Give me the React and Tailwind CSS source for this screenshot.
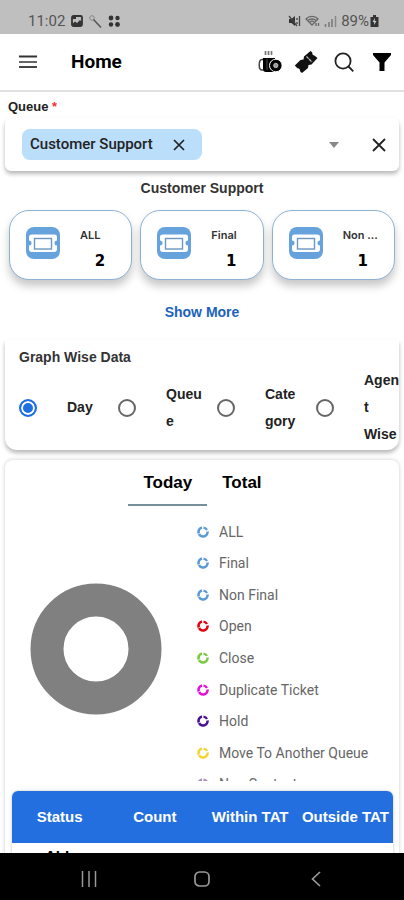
import { useState } from 'react'

const TICKET_CARDS = [
  { label: 'ALL', count: 2 },
  { label: 'Final', count: 1 },
  { label: 'Non Final', count: 1 },
]

const GRAPH_OPTIONS = ['Day', 'Queue', 'Category', 'Agent Wise']

const LEGEND = [
  { label: 'ALL', color: '#5b9bd5' },
  { label: 'Final', color: '#5b9bd5' },
  { label: 'Non Final', color: '#5b9bd5' },
  { label: 'Open', color: '#e3000f' },
  { label: 'Close', color: '#7ac943' },
  { label: 'Duplicate Ticket', color: '#e60fd8' },
  { label: 'Hold', color: '#4b0f91' },
  { label: 'Move To Another Queue', color: '#f2d42e' },
  { label: 'Non Contact', color: '#a98fc4' },
]

const COLUMNS = ['Status', 'Count', 'Within TAT', 'Outside TAT']

function StatusBar() {
  return (
    <div className="flex h-[34px] shrink-0 items-end justify-between bg-[#bfbfbf] pr-[25px] pb-[3px] pl-7 font-['Roboto',sans-serif] text-[15px] leading-5 text-[#555]">
      <div className="flex items-center gap-1.5">
        <span>11:02</span>
        <svg width="12" height="12" viewBox="0 0 12 12">
          <rect x="1" y="1" width="10" height="10" rx="1.5" fill="none" stroke="#333" strokeWidth="1.800" />
          <path d="M1 9l3-2.500 2 1.500 3-3 2 2V11H1z" fill="#333" />
          <path d="M1 1h4v3H1z" fill="#333" />
        </svg>
        <svg width="13" height="13" viewBox="0 0 13 13" fill="none">
          <circle cx="3" cy="3" r="2.3" stroke="#888" />
          <path d="M4.500 4.500L12 12.500" stroke="#555" strokeWidth="1.500" />
        </svg>
        <svg width="12" height="12" viewBox="0 0 12 12" fill="#333">
          <circle cx="3" cy="3" r="2.400" />
          <circle cx="9.500" cy="3" r="2.200" />
          <circle cx="3" cy="9.500" r="2.200" />
          <circle cx="9.500" cy="9.500" r="2.400" />
        </svg>
      </div>
      <div className="flex items-center gap-1">
        <svg width="13" height="12" viewBox="0 0 13 12">
          <path d="M1 4h2.500L7 1v10L3.500 8H1z" fill="#333" />
          <path d="M1 1l8 10M9 3v2M9 7v2M11.500 1v10" stroke="#444" strokeWidth="1.300" />
        </svg>
        <svg width="15" height="12" viewBox="0 0 15 12" fill="none" stroke="#666" strokeWidth="1.300">
          <path d="M1 4C4 .5 10 .5 13 4L7 10z" />
          <path d="M3 5.500c2-2 6-2 8 0M5 7c1-1 3-1 4 0" />
          <path d="M11 8v3M13.500 8v3" />
        </svg>
        <svg width="13" height="12" viewBox="0 0 13 12" stroke="#666" strokeWidth="1.500">
          <path d="M1.500 9v3M5 7v5M8 4v8" stroke="#777" />
          <path d="M11.500 1v11" stroke="#888" />
        </svg>
        <div className="flex items-center gap-px">
          <span>89%</span>
          <svg width="9" height="12" viewBox="0 0 9 12">
            <path d="M3 0h3v2h2.500v10H.5V2H3z" fill="#333" />
            <path d="M5 3L2.500 7h1.700L4 10l2.500-4H4.800z" fill="#ccc" />
          </svg>
        </div>
      </div>
    </div>
  )
}

function TopBar() {
  return (
    <header className="flex h-[58px] shrink-0 items-center border-b-2 border-[#e0e0e0] bg-white pr-3 pl-[19px]">
      <button type="button" aria-label="Menu">
        <svg width="18" height="14" viewBox="0 0 18 14" stroke="#444">
          <path d="M0 1.500h18" stroke="#333" strokeWidth="2" />
          <path d="M0 7h18" strokeWidth="2" stroke="#666" />
          <path d="M0 12h18" strokeWidth="2" />
        </svg>
      </button>
      <h1 className="ml-[34px] flex-1 font-['Roboto',sans-serif] text-[19px] font-bold text-black">Home</h1>
      <div className="flex items-center gap-3">
        <button type="button" aria-label="Break">
          <svg width="24" height="24" viewBox="0 0 24 24" fill="none">
            <path d="M7.500 1v4M10.500 1v4M13.500 1v4" stroke="#777" strokeWidth="1.700" />
            <path d="M5 8h12v14H8c-2 0-3-1-3-2.500z" fill="#000" />
            <path d="M9 9v11" stroke="#666" strokeWidth=".8" />
            <path d="M5 9.500H4C2 9.500 1.200 11 1.200 15S2 20 4 20h1" stroke="#444" strokeWidth="1.500" />
            <circle cx="17.800" cy="15.500" r="6.300" fill="#000" stroke="#fff" />
            <circle cx="17.800" cy="15.500" r="2.200" fill="#999" stroke="#ddd" strokeWidth=".7" />
          </svg>
        </button>
        <button type="button" aria-label="Tickets">
          <svg width="24" height="24" viewBox="0 0 24 24">
            <path
              d="M16.500 1l1.800 1.600c-.3 1.800.8 3 2.400 3.200L23.500 8l-6 6.500-3 .5-.5 3L8 23l-2-1.800c.4-1.800-.8-3.200-2.600-3L.8 15.500 6.500 10l3-.5.500-3z"
              fill="#111"
            />
            <path d="M12.500 6.500l5.500 5.500" stroke="#bbb" strokeWidth="1.300" strokeDasharray="3 .6" />
          </svg>
        </button>
        <button type="button" aria-label="Search" className="ml-1">
          <svg width="20" height="20" viewBox="0 0 20 20" fill="none" stroke="#222" strokeWidth="1.800">
            <circle cx="9" cy="9" r="7.600" />
            <path d="M14.500 14.500L19.300 19.300" />
          </svg>
        </button>
        <button type="button" aria-label="Filter" className="ml-1.5">
          <svg width="20" height="20" viewBox="0 0 20 20">
            <path d="M1 1h18v2l-6.500 7.500V19h-5v-8.500L1 3z" fill="#000" />
          </svg>
        </button>
      </div>
    </header>
  )
}

function QueueSelect() {
  return (
    <section aria-labelledby="queue-label">
      <h2 id="queue-label" className="px-2 pt-[5px] text-[13px] leading-5 font-bold text-[#222]">
        Queue <span className="text-red-500">*</span>
      </h2>
      <div className="mx-[5px] mt-px flex h-[53px] items-center rounded-md bg-white pr-[13px] pl-[17px] shadow-[0_3px_4px_rgba(0,0,0,0.28)]">
        <div className="flex h-[31px] items-center rounded-lg bg-[#bbdefb] pr-[17px] pl-2">
          <span className="font-['Roboto',sans-serif] text-[15px] font-medium text-[#222]">Customer Support</span>
          <button type="button" aria-label="Remove Customer Support" className="ml-5">
            <svg width="12" height="12" viewBox="0 0 12 12" stroke="#222" strokeWidth="1.700">
              <path d="M1 1l10 10M11 1L1 11" />
            </svg>
          </button>
        </div>
        <button type="button" aria-label="Open queue list" className="mr-[33px] ml-auto">
          <svg width="10" height="6" viewBox="0 0 10 6">
            <path d="M0 0h10L5 6z" fill="#888" />
          </svg>
        </button>
        <button type="button" aria-label="Clear queue">
          <svg width="14" height="14" viewBox="0 0 14 14" stroke="#222" strokeWidth="1.800">
            <path d="M1 1l12 12M13 1L1 13" />
          </svg>
        </button>
      </div>
    </section>
  )
}

function TicketIcon() {
  return (
    <svg width="34" height="32" viewBox="0 0 34 32" className="shrink-0">
      <rect width="34" height="32" rx="8" fill="#66a3dc" />
      <path
        d="M6 7.500h22c2 0 3 .8 3 2.500v3.500a2.500 2.500 0 0 0 0 5V22c0 2-1 3-3 3H6c-2 0-3-1-3-3v-3.500a2.500 2.500 0 0 0 0-5V10c0-1.700 1-2.500 3-2.500z"
        fill="#fff"
      />
      <rect x="8.500" y="11.500" width="17" height="10.500" fill="#fff" stroke="#6b97c2" strokeWidth="1.400" />
    </svg>
  )
}

function TicketCard({ label, count }) {
  return (
    <li className="flex h-[70px] items-start rounded-[20px] border border-[#8fb2d3] bg-white pt-4 pl-4 shadow-[0_6px_8px_rgba(0,0,0,0.22)]">
      <TicketIcon />
      <div className="ml-5 flex w-10 flex-col">
        <span className="truncate font-['Inter',sans-serif] text-[11px] leading-4 font-semibold text-[#333]">{label}</span>
        <span className="mt-2 text-center font-['DejaVu_Sans',sans-serif] text-[15px] leading-5 font-bold text-black">{count}</span>
      </div>
    </li>
  )
}

function GraphOptions() {
  const [selected, setSelected] = useState('Day')

  return (
    <section className="mx-[5px] mt-[18px] rounded-b-xl bg-white pt-[7px] pb-0.5 pl-[14px] shadow-[0_3px_4px_rgba(0,0,0,0.28)]">
      <h2 id="graph-title" className="text-sm leading-5 font-bold text-[#333]">
        Graph Wise Data
      </h2>
      <div role="radiogroup" aria-labelledby="graph-title" className="grid grid-cols-4 items-center gap-4">
        {GRAPH_OPTIONS.map((option) => (
          <label key={option} className="flex items-center">
            <input
              type="radio"
              name="graph"
              checked={selected === option}
              onChange={() => setSelected(option)}
              className="h-[18px] w-[18px] shrink-0 appearance-none rounded-full border-2 border-[#666] bg-white checked:border-[#1f6fe0] checked:bg-[#1f6fe0] checked:shadow-[inset_0_0_0_2px_white]"
            />
            <span className="ml-[30px] w-9 shrink-0 text-sm leading-[27px] font-bold wrap-break-word text-[#222]">{option}</span>
          </label>
        ))}
      </div>
    </section>
  )
}

function Legend() {
  return (
    <div className="h-[265px] overflow-hidden">
      <ul className="grid h-[284px] auto-rows-fr">
        {LEGEND.map((item) => (
          <li key={item.label} className="flex items-center gap-2.5">
            <svg width="12" height="12" viewBox="0 0 12 12" fill="none" stroke={item.color} className="shrink-0">
              <path d="M5 1.600A4.500 4.500 0 1 0 10.500 5.500" strokeWidth="2.600" />
              <path d="M6.500 1.600A4.500 4.500 0 0 1 10 4" strokeWidth="2.400" />
              <path d="M1 8.200l2.500-1.100" stroke="#fff" strokeWidth=".7" />
            </svg>
            <span className="font-['Roboto',sans-serif] text-sm whitespace-nowrap text-[#666]">{item.label}</span>
          </li>
        ))}
      </ul>
    </div>
  )
}

function Stats() {
  return (
    <section className="mx-[5px] mt-[10px] rounded-t-lg bg-white pr-1.5 pl-[7px] shadow-[0_0_4px_rgba(0,0,0,0.2)]">
      <div role="tablist" className="flex justify-center">
        <button
          type="button"
          role="tab"
          aria-selected="true"
          className="h-[46px] border-b-2 border-[#78909c] px-[15px] pt-0.5 text-[17px] font-bold text-black"
        >
          Today
        </button>
        <button
          type="button"
          role="tab"
          aria-selected="false"
          className="h-[46px] border-b-2 border-transparent px-[15px] pt-0.5 text-[17px] font-bold text-black"
        >
          Total
        </button>
      </div>
      <div className="mt-[10px] grid grid-cols-[185px_1fr] items-center">
        <svg width="132" height="132" viewBox="0 0 132 132" className="ml-[18px]">
          <circle cx="66" cy="66" r="49" fill="none" stroke="#808080" strokeWidth="33" />
        </svg>
        <Legend />
      </div>
      <div className="mt-[10px] overflow-hidden rounded-t-md shadow-[0_0_3px_rgba(0,0,0,0.25)]">
        <table className="w-full table-fixed text-center text-[15px]">
          <thead className="bg-[#246fe0] text-white">
            <tr className="h-[52px]">
              {COLUMNS.map((name) => (
                <th key={name} className="whitespace-nowrap">
                  {name}
                </th>
              ))}
            </tr>
          </thead>
          <tbody>
            <tr className="h-[26px] font-bold text-black">
              <td>ALL</td>
              <td />
              <td />
              <td />
            </tr>
          </tbody>
        </table>
      </div>
    </section>
  )
}

function NavBar() {
  return (
    <nav className="grid h-[47px] shrink-0 grid-cols-[1fr_50px_1fr] items-center bg-black pt-1">
      <button type="button" aria-label="Recent apps" className="justify-self-center">
        <svg width="16" height="16" viewBox="0 0 16 16" stroke="#999" strokeWidth="1.500">
          <path d="M1.500 0v16M8 0v16M14.500 0v16" />
        </svg>
      </button>
      <button type="button" aria-label="Home screen" className="justify-self-center">
        <svg width="16" height="16" viewBox="0 0 16 16" fill="none" stroke="#999" strokeWidth="1.700">
          <rect x="1" y="1" width="14" height="14" rx="4.500" />
        </svg>
      </button>
      <button type="button" aria-label="Back" className="justify-self-center">
        <svg width="10" height="16" viewBox="0 0 10 16" fill="none" stroke="#999" strokeWidth="1.700">
          <path d="M9 1L1.500 8 9 15" />
        </svg>
      </button>
    </nav>
  )
}

export default function App() {
  return (
    <div className="flex h-screen flex-col overflow-hidden bg-white font-['Liberation_Sans',Arial,sans-serif]">
      <StatusBar />
      <TopBar />
      <main className="min-h-0 flex-1 overflow-hidden">
        <QueueSelect />
        <h2 className="mt-[7px] text-center text-sm leading-5 font-bold text-[#333]">Customer Support</h2>
        <ul className="mt-3 grid grid-cols-3 gap-2 px-[9px]">
          {TICKET_CARDS.map((card) => (
            <TicketCard key={card.label} {...card} />
          ))}
        </ul>
        <button type="button" className="mx-auto mt-[22px] block text-sm leading-5 font-bold text-[#1b62bd]">
          Show More
        </button>
        <GraphOptions />
        <Stats />
      </main>
      <NavBar />
    </div>
  )
}
